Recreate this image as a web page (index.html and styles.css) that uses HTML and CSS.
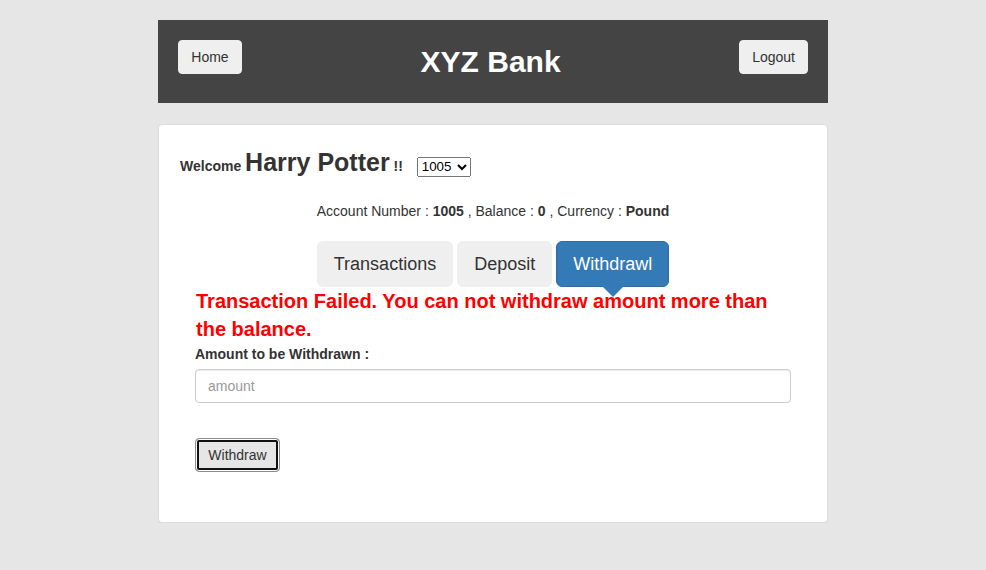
FILE: index.html
```html
<!DOCTYPE html>
<html>
<head>
<meta charset="utf-8">
<title>XYZ Bank</title>
<link rel="stylesheet" href="styles.css">
</head>
<body>
<div class="page">
  <header class="topbar">
    <button class="btn btn-home">Home</button>
    <h2 class="title">XYZ Bank</h2>
    <button class="btn btn-logout">Logout</button>
  </header>

  <main class="card">
    <div class="welcome">
      <strong>Welcome <span class="name">Harry Potter</span> !!</strong>
      <select class="account-select">
        <option>1005</option>
      </select>
    </div>

    <div class="account-info">
      Account Number : <strong>1005</strong> , Balance : <strong>0</strong> , Currency : <strong>Pound</strong>
    </div>

    <nav class="tabs">
      <button class="tab">Transactions</button>
      <button class="tab">Deposit</button>
      <button class="tab tab-active">Withdrawl</button>
    </nav>

    <section class="form-area">
      <div class="error">Transaction Failed. You can not withdraw amount more than the balance.</div>
      <label class="label">Amount to be Withdrawn :</label>
      <input class="input" type="number" placeholder="amount">
      <button class="btn btn-submit">Withdraw</button>
    </section>
  </main>
</div>
</body>
</html>
```

FILE: styles.css
```css
* { box-sizing: border-box; }

html, body {
  margin: 0;
  padding: 0;
  background: #e6e6e6;
  font-family: "Liberation Sans", Arial, sans-serif;
  font-size: 14px;
  color: #333;
}

.page {
  width: 670px;
  margin: 20px auto 0;
}

.topbar {
  height: 83px;
  background: #444;
  padding: 20px;
  display: flex;
  justify-content: space-between;
  align-items: flex-start;
}

.title {
  margin: 0;
  align-self: center;
  color: #fff;
  font-size: 30px;
  font-weight: bold;
  line-height: 33px;
}

.btn {
  font-family: "Liberation Sans", Arial, sans-serif;
  font-size: 14px;
  line-height: 20px;
  padding: 6px 12px;
  border: 1px solid transparent;
  border-radius: 4px;
  background: #efefef;
  color: #333;
  cursor: pointer;
}

.btn-home, .btn-logout {
  height: 34px;
  border-color: #efefef;
}

.btn-home { width: 64px; }

.card {
  margin-top: 21px;
  background: #fff;
  border: 1px solid #ddd;
  border-radius: 4px;
  padding: 19px 21px 50px;
  box-shadow: 0 1px 1px rgba(0,0,0,0.05);
}

.welcome {
  line-height: 36px;
  font-size: 14px;
  white-space: nowrap;
}

.name {
  font-size: 25px;
}

.account-select {
  margin-left: 10px;
  font-family: "Liberation Sans", Arial, sans-serif;
  font-size: 13.333px;
  height: 20px;
  width: 54px;
  color: #000;
}

.account-info {
  text-align: center;
  line-height: 20px;
  margin-top: 17px;
}

.tabs {
  margin-top: 20px;
  display: flex;
  justify-content: center;
  gap: 4px;
}

.tab {
  font-family: "Liberation Sans", Arial, sans-serif;
  font-size: 18px;
  line-height: 24px;
  padding: 10px 16px;
  border: 1px solid #efefef;
  border-radius: 6px;
  background: #efefef;
  color: #333;
  position: relative;
  cursor: pointer;
}

.tab-active {
  background: #337ab7;
  border-color: #2e6da4;
  color: #fff;
}

.tab-active::after {
  content: "";
  position: absolute;
  left: 50%;
  top: 100%;
  margin-left: -11px;
  border-left: 11px solid transparent;
  border-right: 11px solid transparent;
  border-top: 11px solid #337ab7;
}

.form-area {
  padding: 0 15px;
}

.error {
  color: #ff0000;
  font-weight: bold;
  font-size: 20px;
  line-height: 28px;
  padding-left: 1px;
  margin-bottom: 1px;
}

.label {
  display: block;
  font-weight: bold;
  line-height: 20px;
  margin-bottom: 5px;
}

.input {
  display: block;
  width: 100%;
  height: 34px;
  padding: 6px 12px;
  font-family: "Liberation Sans", Arial, sans-serif;
  font-size: 14px;
  color: #555;
  border: 1px solid #ccc;
  border-radius: 4px;
  box-shadow: inset 0 1px 1px rgba(0,0,0,0.075);
  outline: none;
}

.input::placeholder { color: #999; }

.btn-submit {
  display: block;
  margin-top: 35px;
  height: 34px;
  width: 85px;
  padding: 6px 0;
  background: #e6e6e6;
  border: 1px solid #8c8c8c;
  box-shadow: inset 0 0 0 1px #fff, inset 0 0 0 3px #111;
}
```
